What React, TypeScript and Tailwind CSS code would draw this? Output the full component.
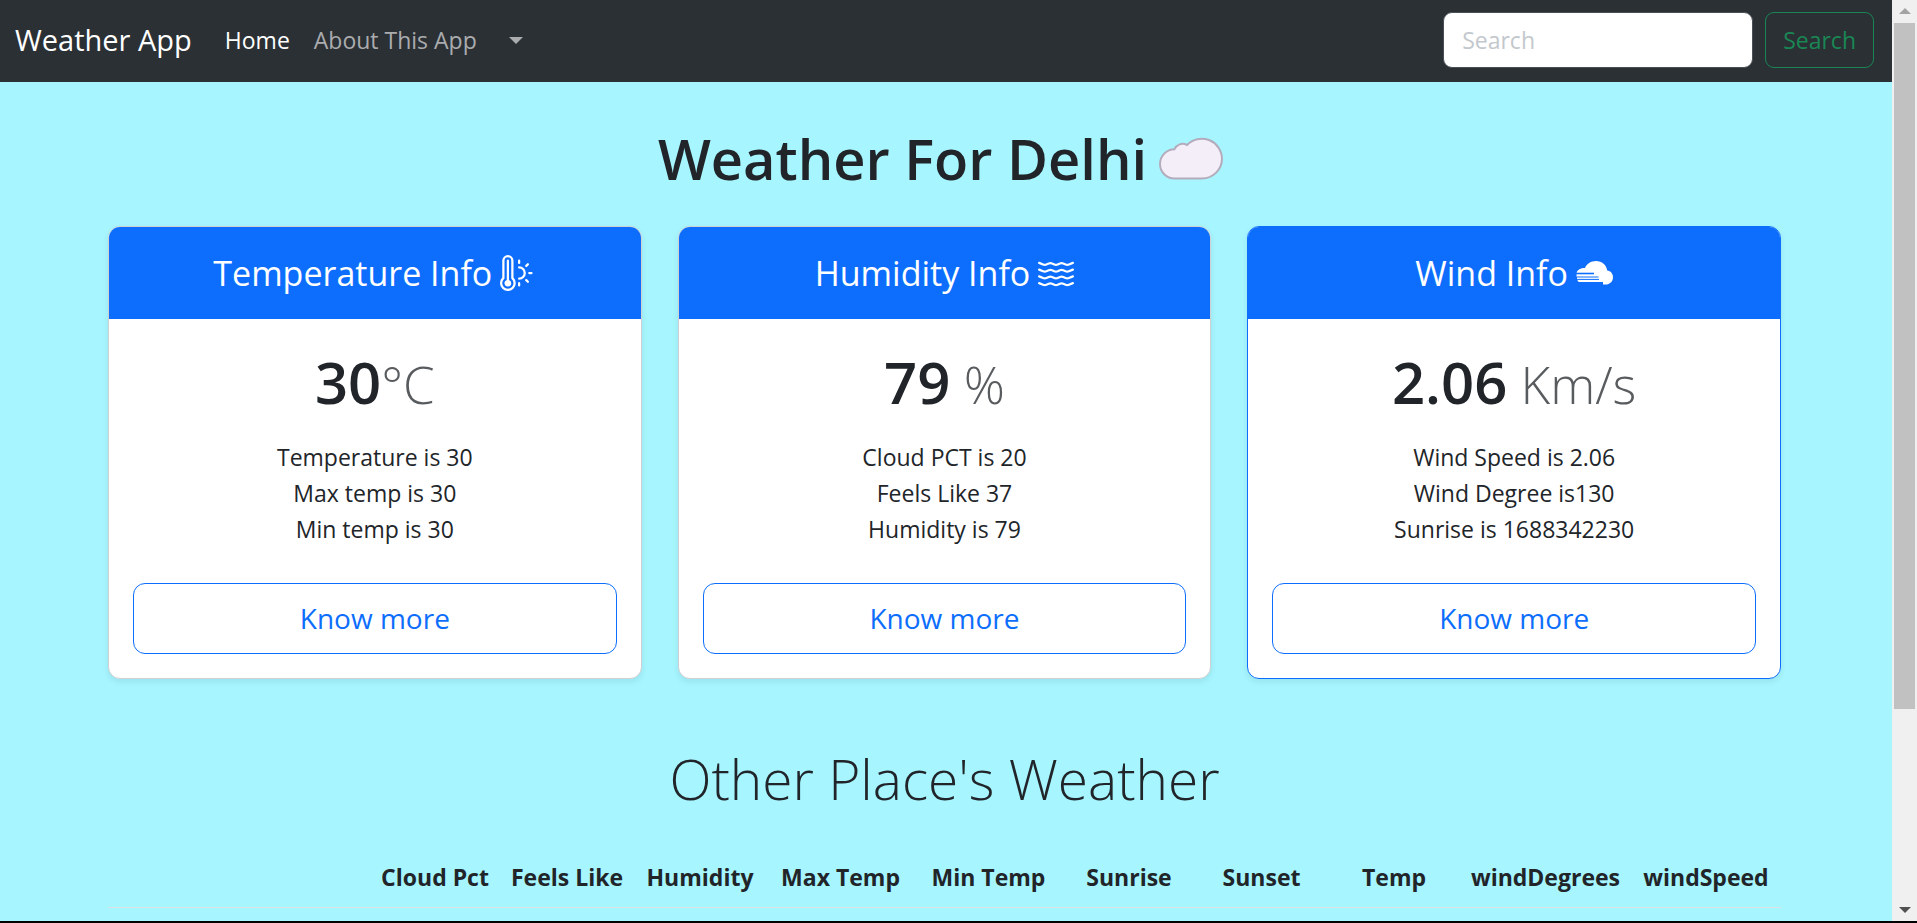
import type { ReactNode } from "react";
import { BsThermometerSun, BsWater } from "react-icons/bs";

type Card = {
  title: string;
  icon: ReactNode;
  value: string;
  unit: string;
  lines: string[];
  highlighted?: boolean;
};

function WindCloudIcon() {
  return (
    <svg viewBox="0 0 37 24" className="h-6 w-[37px]" aria-hidden="true">
      <path
        d="M0.5 12C1.5 8.8 4.5 7 9 7C10.5 2.8 15 0 20 0C26 0 30.5 4 31.2 9.5C34.8 9.8 37 12.8 37 16.2C37 20.5 33.8 23.5 29.5 23.5H27V21H3.5C2.3 21 1.5 20.2 1.5 19H1V16H0.5Z"
        fill="#fff"
      />
      <path d="M0 12.5H18" stroke="#0d6efd" strokeWidth="1.6" />
      <path d="M0 16H22.5M0 18.4H23" stroke="#0d6efd" strokeWidth="1" />
    </svg>
  );
}

const cards: Card[] = [
  {
    title: "Temperature Info",
    icon: <BsThermometerSun />,
    value: "30",
    unit: "°C",
    lines: ["Temperature is 30", "Max temp is 30", "Min temp is 30"],
  },
  {
    title: "Humidity Info",
    icon: <BsWater />,
    value: "79",
    unit: " %",
    lines: ["Cloud PCT is 20", "Feels Like 37", "Humidity is 79"],
  },
  {
    title: "Wind Info",
    icon: <WindCloudIcon />,
    value: "2.06",
    unit: " Km/s",
    lines: ["Wind Speed is 2.06", "Wind Degree is130", "Sunrise is 1688342230"],
    highlighted: true,
  },
];

function CloudIcon() {
  return (
    <svg viewBox="0 0 64 43" className="h-[43px] w-16" aria-hidden="true">
      <path
        d="M15.5 41.5A14.5 14.5 0 0 1 1 27A14.8 14.8 0 0 1 15.5 12.2C17.5 7.5 23 5.3 28 8A20.3 20.3 0 0 1 63 21.5A20 20 0 0 1 43 41.5Z"
        fill="#f3eef8"
        stroke="#b4acbc"
        strokeWidth="2"
      />
    </svg>
  );
}

function Navbar() {
  return (
    <nav className="flex items-center bg-[#2b3035] pt-3 pr-[18px] pb-[14px] pl-[15px]">
      <a href="#" className="mr-[33px] text-[29px] leading-[44px] text-white">
        Weather App
      </a>
      <ul className="flex flex-1 items-center gap-6 text-[23px] leading-9">
        <li>
          <a href="#" className="text-white">
            Home
          </a>
        </li>
        <li>
          <a href="#about" className="text-[#aaacae]">
            About This App
          </a>
        </li>
        <li>
          <button type="button" aria-label="More" className="flex h-9 items-center px-2 text-[#aaacae]">
            <svg viewBox="0 0 14 7" className="h-[7px] w-[14px]" fill="currentColor" aria-hidden="true">
              <path d="M0 0H14L7 7Z" />
            </svg>
          </button>
        </li>
      </ul>
      <form className="flex gap-3" role="search" onSubmit={(e) => e.preventDefault()}>
        <input
          type="search"
          placeholder="Search"
          aria-label="Search"
          className="w-[310px] rounded-[9px] border border-[#495057] bg-white px-[18px] py-[9px] text-[23px] leading-9 text-[#212529] placeholder:text-[#c3c8cd]"
        />
        <button
          type="submit"
          className="rounded-[9px] border border-[#198754] px-[17px] py-[9px] text-[23px] leading-9 text-[#198754]"
        >
          Search
        </button>
      </form>
    </nav>
  );
}

function WeatherCard({ card }: { card: Card }) {
  return (
    <section
      className={
        "overflow-hidden rounded-xl border bg-white text-center shadow-[0_3px_6px_rgba(0,0,0,0.075)] " +
        (card.highlighted ? "border-[#0d6efd]" : "border-[#cfd0d2]")
      }
    >
      <h2 className="flex items-center justify-center gap-2 bg-[#0d6efd] py-6 text-[34px] leading-[44px] text-white">
        {card.title}
        <span className="text-[36px]">{card.icon}</span>
      </h2>
      <div className="p-6">
        <p className="text-[58px] leading-[78px] font-semibold whitespace-pre">
          {card.value}
          <small className="text-[51px] font-light text-[#595c5f]">{card.unit}</small>
        </p>
        <ul className="mt-4 mb-9 text-[23px] leading-9">
          {card.lines.map((line) => (
            <li key={line}>{line}</li>
          ))}
        </ul>
        <button
          type="button"
          className="w-full rounded-xl border border-[#0d6efd] py-3 text-[28px] leading-[45px] text-[#0d6efd]"
        >
          Know more
        </button>
      </div>
    </section>
  );
}

function PlacesTable() {
  return (
    <table className="w-full table-fixed text-[23px] leading-9">
      <colgroup>
        <col />
        <col className="w-[132px]" />
        <col className="w-[132px]" />
        <col className="w-[134px]" />
        <col className="w-[147px]" />
        <col className="w-[149px]" />
        <col className="w-[132px]" />
        <col className="w-[133px]" />
        <col className="w-[132px]" />
        <col className="w-[171px]" />
        <col className="w-[150px]" />
      </colgroup>
      <thead>
        <tr className="border-b border-[#dee2e6]">
          <td />
          {[
            "Cloud Pct",
            "Feels Like",
            "Humidity",
            "Max Temp",
            "Min Temp",
            "Sunrise",
            "Sunset",
            "Temp",
            "windDegrees",
            "windSpeed",
          ].map((name) => (
            <th key={name} scope="col" className="py-3 text-center font-bold whitespace-nowrap">
              {name}
            </th>
          ))}
        </tr>
      </thead>
    </table>
  );
}

function Scrollbar() {
  return (
    <div className="flex w-[25px] shrink-0 flex-col items-center bg-[#f0f0f0] py-2" aria-hidden="true">
      <svg viewBox="0 0 12 6" className="h-[6px] w-3" fill="#a3a3a3">
        <path d="M0 6L6 0L12 6Z" />
      </svg>
      <div className="mt-[9px] h-[686px] w-[21px] bg-[#c1c1c1]" />
      <svg viewBox="0 0 12 6" className="mt-auto h-[6px] w-3" fill="#505050">
        <path d="M0 0H12L6 6Z" />
      </svg>
    </div>
  );
}

export default function App() {
  return (
    <div className="flex h-screen overflow-hidden border-b-2 border-black bg-[#a6f5ff] font-['Open_Sans','Noto_Sans',sans-serif] text-[#212529]">
      <div className="min-w-0 flex-1">
        <Navbar />
        <main className="mx-auto max-w-[1710px] pr-5 pl-[17px]">
          <h1 className="flex items-center justify-center gap-3 pt-10 pr-2 pb-8 text-[56px] leading-[72px] font-semibold">
            Weather For Delhi
            <CloudIcon />
          </h1>
          <div className="grid grid-cols-3 gap-9">
            {cards.map((card) => (
              <WeatherCard key={card.title} card={card} />
            ))}
          </div>
          <h2 className="pt-16 pb-8 text-center text-[55px] leading-[72px] font-light">Other Place's Weather</h2>
          <PlacesTable />
        </main>
      </div>
      <Scrollbar />
    </div>
  );
}
